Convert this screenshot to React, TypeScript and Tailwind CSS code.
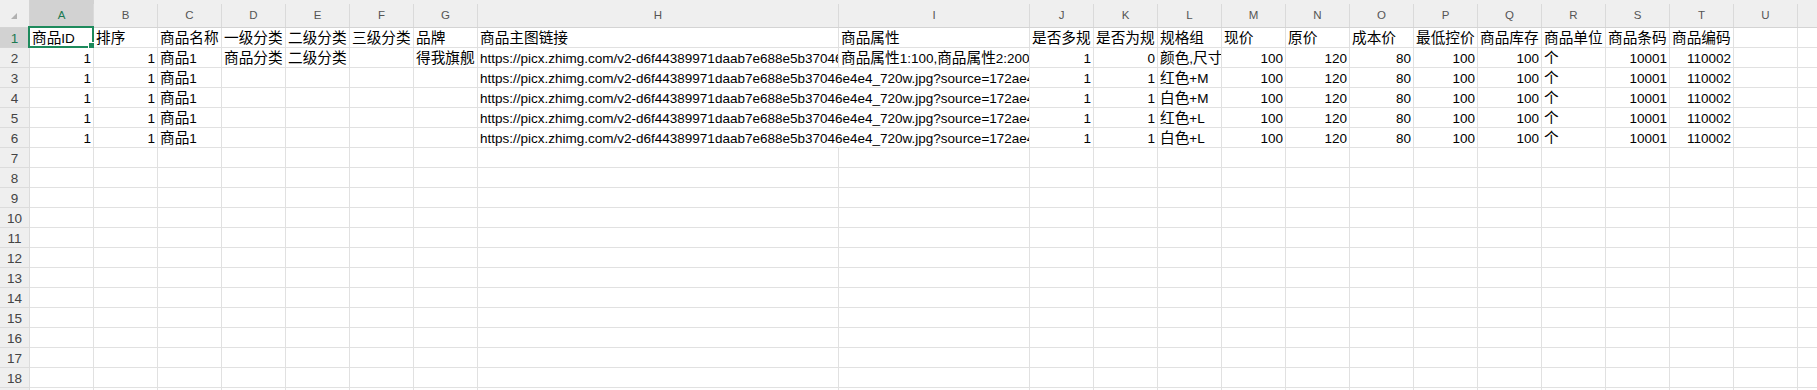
import React from 'react';

const COLS = ['A', 'B', 'C', 'D', 'E', 'F', 'G', 'H', 'I', 'J', 'K', 'L', 'M', 'N', 'O', 'P', 'Q', 'R', 'S', 'T', 'U', 'V'];

const URL = 'https://picx.zhimg.com/v2-d6f44389971daab7e688e5b37046e4e4_720w.jpg?source=172ae4b5';

type Cell = { v: string; num?: boolean; span?: number } | null;

const header: Cell[] = [
  '商品ID', '排序', '商品名称', '一级分类', '二级分类', '三级分类', '品牌', '商品主图链接', '商品属性',
  '是否多规', '是否为规', '规格组', '现价', '原价', '成本价', '最低控价', '商品库存', '商品单位', '商品条码', '商品编码',
].map((v) => ({ v }));

const prices: Cell[] = [
  { v: '100', num: true },
  { v: '120', num: true },
  { v: '80', num: true },
  { v: '100', num: true },
  { v: '100', num: true },
  { v: '个' },
  { v: '10001', num: true },
  { v: '110002', num: true },
];

const row2: Cell[] = [
  { v: '1', num: true },
  { v: '1', num: true },
  { v: '商品1' },
  { v: '商品分类' },
  { v: '二级分类' },
  null,
  { v: '得我旗舰' },
  { v: URL },
  { v: '商品属性1:100,商品属性2:200' },
  { v: '1', num: true },
  { v: '0', num: true },
  { v: '颜色,尺寸' },
  ...prices,
];

// the link spills over the empty I column, so it takes two columns
const specRow = (spec: string): Cell[] => [
  { v: '1', num: true },
  { v: '1', num: true },
  { v: '商品1' },
  null,
  null,
  null,
  null,
  { v: URL, span: 2 },
  null,
  { v: '1', num: true },
  { v: '1', num: true },
  { v: spec },
  ...prices,
];

const data: Cell[][] = [header, row2, specRow('红色+M'), specRow('白色+M'), specRow('红色+L'), specRow('白色+L')];

function Txt({ s }: { s: string }) {
  const parts = s.split(/([\u3400-\u9fff]+)/);
  return (
    <>
      {parts.map((p, i) =>
        i % 2 ? (
          <span key={i} className="text-[14.67px] leading-none">
            {p}
          </span>
        ) : (
          p
        )
      )}
    </>
  );
}

function Corner() {
  return (
    <div className="h-[28px] bg-[#efefef] border-b border-r border-[#d4d4d4] pl-[11px] pt-[13px]">
      <svg width="6" height="6" viewBox="0 0 6 6">
        <polygon points="6,0 6,6 0,6" fill="#b1b1b1" />
      </svg>
    </div>
  );
}

function ColHead({ label, active }: { label: string; active?: boolean }) {
  return (
    <div className={`h-[28px] border-b flex ${active ? 'bg-[#d2d2d2] border-[#1d8a5c]' : 'bg-[#efefef] border-[#d4d4d4]'}`}>
      <div
        className={`mt-[4px] flex-1 border-r border-[#dadada] flex items-center justify-center text-[11.5px] ${
          active ? 'text-[#1d7a52]' : 'text-[#555]'
        }`}
      >
        {label}
      </div>
    </div>
  );
}

function RowHead({ n, active }: { n: number; active?: boolean }) {
  return (
    <div
      className={`h-[20px] border-b border-r text-center leading-[21px] ${
        active ? 'bg-[#d2d2d2] text-[#1d7a52] border-[#d4d4d4]' : 'bg-[#efefef] text-[#444] border-[#dcdcdc]'
      }`}
    >
      {n}
    </div>
  );
}

export default function App() {
  const rows = Array.from({ length: 19 }, (_, i) => i);

  return (
    <div className="w-[1817px] h-[390px] overflow-hidden bg-white font-['Liberation_Sans','Noto_Sans_CJK_SC',sans-serif] text-[13.5px]">
      <div className="grid grid-cols-[30px_repeat(7,64px)_361px_191px_repeat(13,64px)] w-max">
        <Corner />
        {COLS.map((c) => (
          <ColHead key={c} label={c} active={c === 'A'} />
        ))}

        {rows.map((r) => {
          const cells = data[r] ?? [];
          const out: React.ReactNode[] = [<RowHead key="h" n={r + 1} active={r === 0} />];
          for (let c = 0; c < COLS.length; c++) {
            const cell = cells[c] ?? null;
            const span = cell?.span ?? 1;
            const selected = r === 0 && c === 0;
            out.push(
              <div
                key={c}
                className={`relative h-[20px] border-r border-b border-[#e1e1e1] whitespace-nowrap leading-[21px] text-black ${
                  selected ? '' : 'overflow-hidden'
                } ${cell?.num ? 'text-right pr-[2px]' : 'pl-[2px]'}`}
                style={span > 1 ? { gridColumn: `span ${span}` } : undefined}
              >
                {cell && (
                  <div className="overflow-hidden">
                    <Txt s={cell.v} />
                  </div>
                )}
                {selected && (
                  <div className="absolute -left-[2px] -top-[2px] -right-[1px] -bottom-[1px] border-2 border-[#1d8a5c]">
                    <div className="absolute left-[58px] top-[14px] w-[7px] h-[7px] bg-[#1d8a5c] border border-white" />
                  </div>
                )}
              </div>
            );
            if (span > 1) c += span - 1;
          }
          return <React.Fragment key={r}>{out}</React.Fragment>;
        })}
      </div>
    </div>
  );
}
